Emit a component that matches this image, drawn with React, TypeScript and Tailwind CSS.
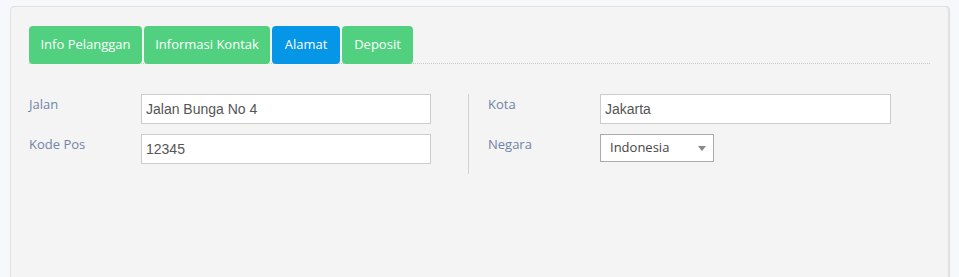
import React from "react";

const tabs = [
  { label: "Info Pelanggan", w: "w-[113px]", active: false },
  { label: "Informasi Kontak", w: "w-[126px]", active: false },
  { label: "Alamat", w: "w-[68px]", active: true },
  { label: "Deposit", w: "w-[71px]", active: false },
];

function Field({ label, value, wide }: { label: string; value: string; wide?: boolean }) {
  return (
    <div className="flex mb-[10px]">
      <div className="w-[112px] pt-[1px] text-[13px] leading-[18px] text-[#7183a6] font-['Open_Sans',sans-serif]">
        {label}
      </div>
      <input
        readOnly
        value={value}
        className={`${wide ? "w-[291px]" : "w-[290px]"} h-[30px] border border-[#cccccc] bg-white px-[4px] text-[14px] text-[#555] font-['Liberation_Sans',Arial,sans-serif] outline-none`}
      />
    </div>
  );
}

export default function App() {
  return (
    <div className="w-[959px] h-[277px] overflow-hidden bg-[#f6f8fc] pl-[10px] pt-[6px]">
      <div className="w-[939px] h-[300px] bg-[#f4f4f4] border border-[#e1e1e1] rounded-[4px] shadow-[1px_0_1px_rgba(0,0,0,0.10)] px-[18px] pt-[19px]">
        <div className="flex gap-[2px] border-b border-dotted border-[#c9c9c9]">
          {tabs.map((t) => (
            <div
              key={t.label}
              className={`${t.w} h-[38px] -mb-[1px] rounded-[4px] flex items-center justify-center text-white text-[13px] font-['Open_Sans',sans-serif] ${
                t.active ? "bg-[#0596e8]" : "bg-[#51d17f]"
              }`}
            >
              {t.label}
            </div>
          ))}
        </div>
        <div className="flex mt-[30px]">
          <div className="w-[439px]">
            <Field label="Jalan" value="Jalan Bunga No 4" />
            <Field label="Kode Pos" value="12345" />
          </div>
          <div className="border-l border-[#d5d2cd] pl-[19px]">
            <Field label="Kota" value="Jakarta" wide />
            <div className="flex mb-[10px]">
              <div className="w-[112px] pt-[1px] text-[13px] leading-[18px] text-[#7183a6] font-['Open_Sans',sans-serif]">
                Negara
              </div>
              <div className="w-[114px] h-[28px] border border-[#aaaaaa] bg-white flex items-center justify-between pl-[9px] pr-[7px] text-[13px] text-[#444] font-['Open_Sans',sans-serif]">
                <span>Indonesia</span>
                <svg width="8" height="5" viewBox="0 0 8 5">
                  <path d="M0 0 L8 0 L4 5 Z" fill="#888" />
                </svg>
              </div>
            </div>
          </div>
        </div>
      </div>
    </div>
  );
}
